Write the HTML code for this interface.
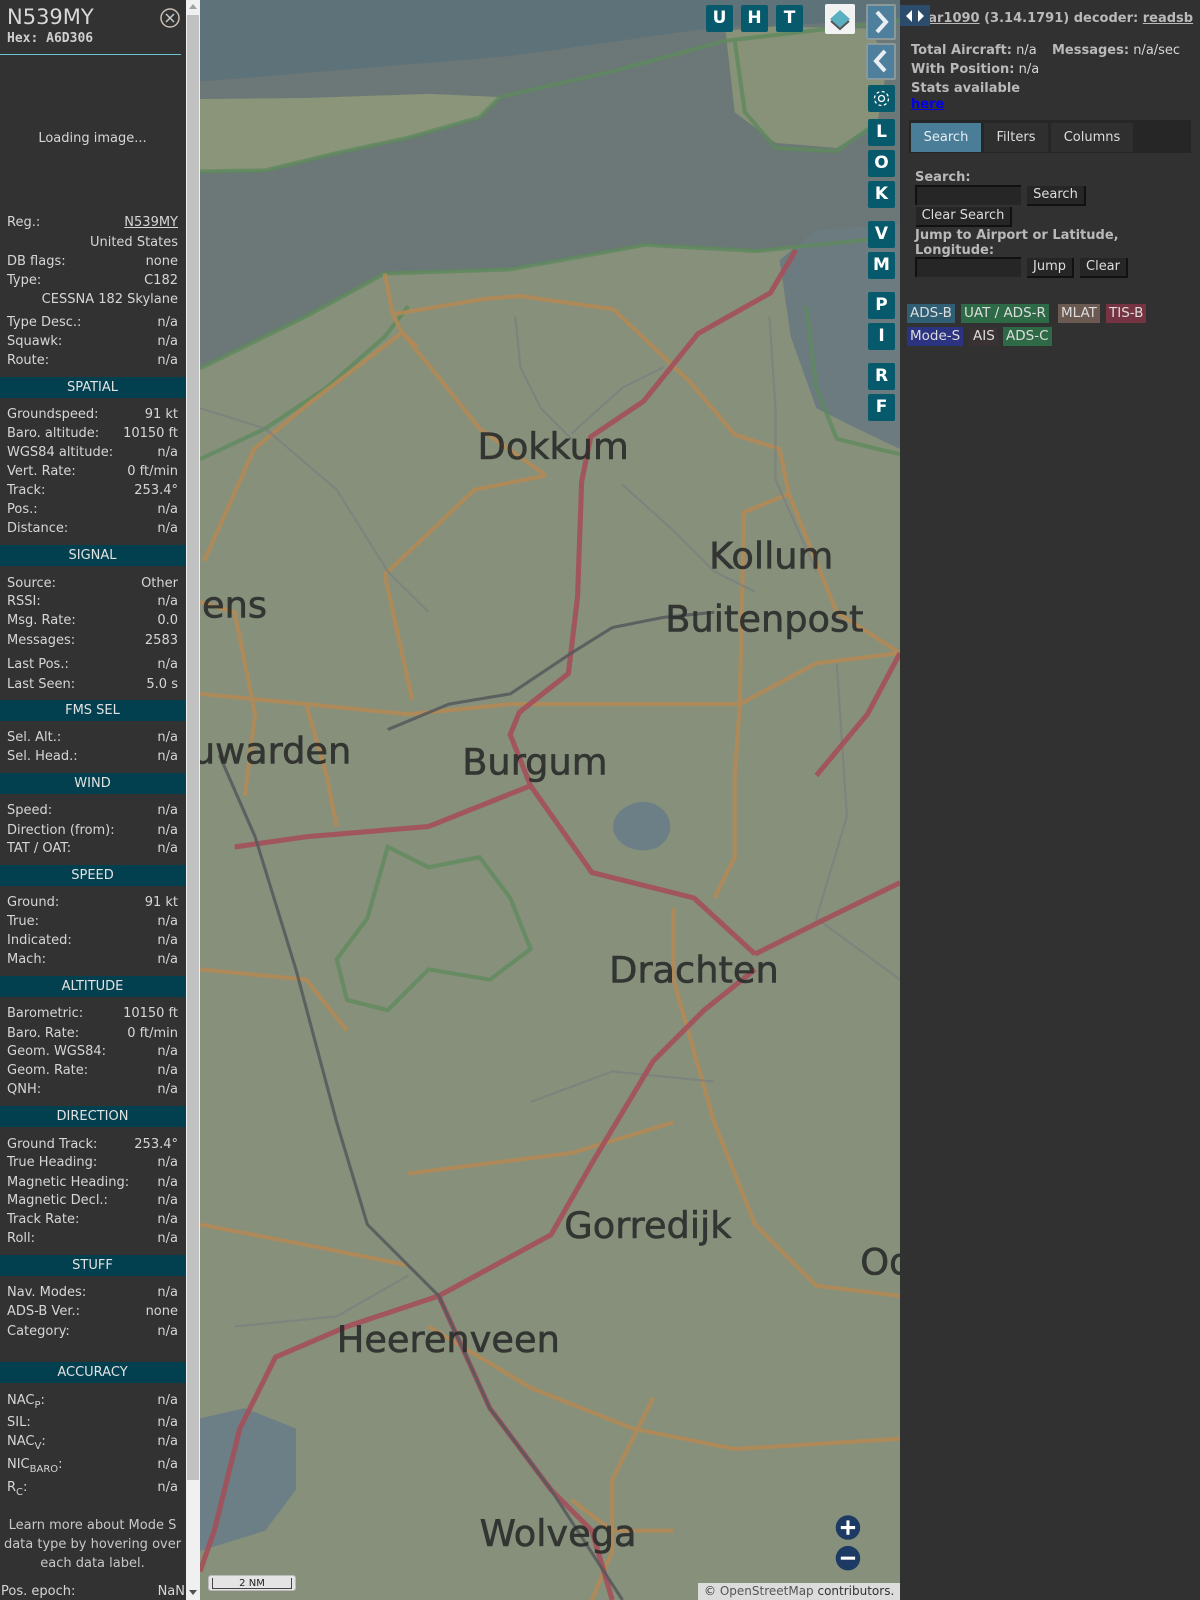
<!DOCTYPE html>
<html><head><meta charset="utf-8"><style>
*{margin:0;padding:0;box-sizing:border-box}
body{width:1200px;height:1600px;overflow:hidden;background:#313131;font-family:"DejaVu Sans","Liberation Sans",sans-serif;position:relative;color:#d6d6d6}
.a{position:absolute}
#side{position:absolute;left:0;top:0;width:186px;height:1600px;background:#323232;overflow:hidden}
.r{position:absolute;left:7px;width:171px;height:18px;line-height:18px;font-size:13px;white-space:nowrap;margin-top:2px}
.r .v{position:absolute;right:0;top:0}
.h{position:absolute;left:0;width:185px;height:21px;line-height:21px;text-align:center;background:#02404f;color:#e2e2e2;font-size:13px;margin-top:1px}
sub{font-size:10px;vertical-align:-4px;line-height:0}
.btn{position:absolute;width:27px;height:27px;background:#075a6b;color:#fff;font:bold 17px "DejaVu Sans",sans-serif;text-align:center;line-height:27px;border-radius:2px}
#rp{position:absolute;left:900px;top:0;width:300px;height:1600px;background:#313131}
.b{font-weight:bold;color:#b9b9b9}
.tab{position:absolute;top:123px;height:29px;line-height:29px;font-size:13px;text-align:center;background:#2f2f2f;color:#ddd}
.inp{position:absolute;width:106px;height:20px;background:#262626;border-top:2px solid #111;border-left:2px solid #111}
.bt{position:absolute;height:20px;line-height:18px;font-size:13px;background:#262626;color:#ddd;text-align:center;border-right:2px solid #111;border-bottom:2px solid #111}
.lg{position:absolute;height:19px;line-height:19px;font-size:13.5px;padding:0 3px;color:#ddd}
</style></head><body>

<svg class="a" style="left:0;top:0" width="1200" height="1600" viewBox="0 0 1176 1568">
<rect x="196" y="0" width="686" height="1568" fill="#86907a"/>
<!-- water -->
<path d="M196 0H882V240L850 235 780 242 742 246 632 240 500 264 377 268 300 310 196 361Z" fill="#6c7777"/>
<path d="M196 0H882V20L700 27 500 55 196 80Z" fill="#5e7379"/>
<path d="M196 97L300 96 420 92 490 95 470 115 400 135 330 150 260 167 196 168Z" fill="#8a9579"/>
<path d="M711 30L760 26 852 28 870 60 860 120 820 145 760 140 720 110Z" fill="#879278"/>
<path d="M764 255L800 225 882 220V440L840 420 800 400 775 330Z" fill="#6b7b80"/>
<path d="M615 790a25 20 0 1 0 30 40a20 18 0 1 0-30-40Z" fill="#6c7f86"/>
<path d="M196 1390L240 1380 290 1400 290 1460 260 1500 196 1520Z" fill="#6c7f86"/>
<!-- green boundaries -->
<g fill="none" stroke="#5f8a5e" stroke-width="4" opacity=".8">
<path d="M196 361L300 310 377 268 500 264 632 240 742 246 780 242 850 235"/>
<path d="M196 168L260 167 330 150 400 135 470 115 490 95 600 70 711 40 882 20"/>
<path d="M196 450L260 420 320 380 377 330 400 300"/>
<path d="M380 830L420 850 470 840 500 880 520 930 480 960 420 950 380 990 340 980 330 940 360 900Z"/>
<path d="M790 300L800 380 820 430 860 440 882 445"/>
<path d="M720 40L730 110 760 145 820 148 860 120"/>
</g>
<!-- orange roads -->
<g fill="none" stroke="#b58a55" stroke-width="4" opacity=".85">
<path d="M377 268L385 308 394 326 409 340"/>
<path d="M385 308L474 293 509 290 601 303 676 374 720 426 764 440 773 484 729 502 725 690"/>
<path d="M394 326L302 396 249 440 200 550"/>
<path d="M394 326L430 370 470 420 535 466"/>
<path d="M535 466L465 480 377 563 404 686"/>
<path d="M196 590L230 600 250 700 240 780"/>
<path d="M196 680L300 690 400 700 500 690 600 690 725 690 800 650 882 640"/>
<path d="M725 690L720 760 720 840 700 880"/>
<path d="M300 690L320 760 330 810"/>
<path d="M773 484L820 600 882 640"/>
<path d="M196 950L300 960 340 1010"/>
<path d="M660 890L660 960 700 1100 740 1200 800 1260 882 1270"/>
<path d="M400 1150L560 1130 660 1100"/>
<path d="M196 1200L300 1220 400 1240"/>
<path d="M420 1300L520 1360 620 1400 720 1420 882 1410"/>
<path d="M560 1470L600 1500 660 1500"/>
<path d="M640 1370L600 1450 600 1520 580 1568"/>
</g>
<!-- gray minor roads -->
<g fill="none" stroke="#7a7d80" stroke-width="2" opacity=".7">
<path d="M196 400L260 420 330 480 380 560 420 600"/>
<path d="M505 310L510 360 530 400 550 420 560 430"/>
<path d="M560 425L610 380 650 360"/>
<path d="M610 475L660 520 700 560 740 580"/>
<path d="M754 310L760 400 760 470 800 560"/>
<path d="M820 650L830 800 800 900 882 960"/>
<path d="M230 1300L330 1290 400 1250"/>
<path d="M520 1080L600 1050 700 1060"/>
</g>
<!-- red roads -->
<g fill="none" stroke="#a4505a" stroke-width="5" opacity=".9">
<path d="M780 245L755 287 684 327 631 393 579 428 570 472 566 585 557 660 509 698 500 720 520 770 580 855 680 880 740 935"/>
<path d="M740 935L800 905 882 865"/>
<path d="M230 830L300 820 420 810 520 770"/>
<path d="M740 950L690 990 640 1040 580 1140 540 1210 430 1270 340 1300 270 1330 235 1400 210 1500 196 1540"/>
<path d="M430 1270L480 1380 540 1460 580 1500 600 1568"/>
<path d="M800 760L850 700 882 640"/>
</g>
<!-- rail -->
<g fill="none" stroke="#55585c" stroke-width="3" opacity=".85">
<path d="M215 740L250 820 290 950 330 1100 360 1200 430 1270 480 1380 540 1460 610 1568"/>
<path d="M380 715L440 690 500 680 560 640 600 615 650 605 700 600"/>
</g>
<g font-family="DejaVu Sans,sans-serif" font-size="36" fill="#2a2c2b" stroke="#2a2c2b" stroke-width=".6" opacity=".9">
<text x="468" y="450">Dokkum</text>
<text x="695" y="557">Kollum</text>
<text x="188" y="605">iens</text>
<text x="652" y="619">Buitenpost</text>
<text x="188" y="748">uwarden</text>
<text x="453" y="759">Burgum</text>
<text x="597" y="963">Drachten</text>
<text x="553" y="1213">Gorredijk</text>
<text x="843" y="1249">Od</text>
<text x="330" y="1325">Heerenveen</text>
<text x="470" y="1515">Wolvega</text>
</g>
<g>
<circle cx="831" cy="1497" r="12" fill="#1c3a63"/><path d="M824 1497H838M831 1490V1504" stroke="#fff" stroke-width="3"/>
<circle cx="831" cy="1527" r="12" fill="#1c3a63"/><path d="M824 1527H838" stroke="#fff" stroke-width="3"/>
</g>
</svg>

<!-- scale & attribution -->
<div class="a" style="left:208px;top:1575px;width:88px;height:16px;background:#e4e4e4;border-radius:3px;border:1px solid #bbb"><div style="margin:2px 3px 0;border:1px solid #444;border-top:none;height:11px;font-size:10px;line-height:11px;text-align:center;color:#222">2 NM</div></div>
<div class="a" style="left:698px;top:1583px;width:202px;height:17px;background:#dcdcdc;font-size:12px;line-height:17px;color:#333;padding-left:6px;white-space:nowrap">© <span style="color:#555">OpenStreetMap</span> contributors.</div>

<!-- map buttons -->
<div class="btn" style="left:706px;top:5px">U</div>
<div class="btn" style="left:741px;top:5px">H</div>
<div class="btn" style="left:776px;top:5px">T</div>
<div class="a" style="left:825px;top:4px;width:30px;height:30px;background:#f2f2f2;border-radius:2px">
<svg width="30" height="30"><path d="M15 6L25 15 15 24 5 15Z" fill="#5ab0c0"/><path d="M6 17L15 25 24 17" fill="none" stroke="#555" stroke-width="2"/></svg></div>
<div class="a" style="left:866px;top:4px;width:30px;height:36px;background:#4e7f9c;border:2px solid #8a9a9a;border-radius:2px"><svg width="26" height="32"><path d="M9 6L18 16 9 26" fill="none" stroke="#e8eef2" stroke-width="4"/></svg></div>
<div class="a" style="left:866px;top:43px;width:30px;height:37px;background:#4e7f9c;border:2px solid #8a9a9a;border-radius:2px"><svg width="26" height="33"><path d="M17 6L8 16 17 26" fill="none" stroke="#e8eef2" stroke-width="4"/></svg></div>
<div class="btn" style="left:868px;top:85px"><svg width="27" height="27"><circle cx="13.5" cy="13.5" r="3" fill="none" stroke="#fff" stroke-width="1.3"/><circle cx="13.5" cy="13.5" r="7" fill="none" stroke="#fff" stroke-width="1.3" stroke-dasharray="3 2.5"/></svg></div>
<div class="btn" style="left:868px;top:119px">L</div>
<div class="btn" style="left:868px;top:150px">O</div>
<div class="btn" style="left:868px;top:181px">K</div>
<div class="btn" style="left:868px;top:221px">V</div>
<div class="btn" style="left:868px;top:252px">M</div>
<div class="btn" style="left:868px;top:292px">P</div>
<div class="btn" style="left:868px;top:323px">I</div>
<div class="btn" style="left:868px;top:363px">R</div>
<div class="btn" style="left:868px;top:394px">F</div>

<!-- right panel -->
<div id="rp">
<div class="a b" style="left:22px;top:11px;font-size:13px;white-space:nowrap"><u>tar1090</u> (3.14.1791) decoder: <u>readsb</u></div>
<div class="a" style="left:0;top:5px;width:30px;height:21px;background:#2c4c6e"><svg width="30" height="21"><path d="M6 11L12 5V17Z M24 11L18 5V17Z" fill="#fff"/></svg></div>
<div class="a" style="left:11px;top:43px;font-size:13px;white-space:nowrap"><span class="b">Total Aircraft:</span> n/a</div>
<div class="a" style="left:152px;top:43px;font-size:13px;white-space:nowrap"><span class="b">Messages:</span> n/a/sec</div>
<div class="a" style="left:11px;top:62px;font-size:13px"><span class="b">With Position:</span> n/a</div>
<div class="a b" style="left:11px;top:81px;font-size:13px">Stats available</div>
<div class="a" style="left:11px;top:97px;font-size:13px;font-weight:bold;color:#0000ee;text-decoration:underline">here</div>
<div class="a" style="left:9px;top:120px;width:282px;height:33px;background:#262626"></div>
<div class="tab" style="left:11px;width:70px;background:#4a7d98;color:#e6eef2">Search</div>
<div class="tab" style="left:84px;width:64px">Filters</div>
<div class="tab" style="left:151px;width:82px">Columns</div>
<div class="a b" style="left:15px;top:170px;font-size:13px">Search:</div>
<div class="inp" style="left:15px;top:185px"></div>
<div class="bt" style="left:127px;top:186px;width:59px">Search</div>
<div class="bt" style="left:16px;top:207px;width:96px">Clear Search</div>
<div class="a b" style="left:15px;top:228px;font-size:13px;line-height:15px">Jump to Airport or Latitude,<br>Longitude:</div>
<div class="inp" style="left:15px;top:257px"></div>
<div class="bt" style="left:127px;top:258px;width:47px">Jump</div>
<div class="bt" style="left:180px;top:258px;width:48px">Clear</div>
<div class="lg" style="left:7px;top:304px;background:#305f74">ADS-B</div>
<div class="lg" style="left:61px;top:304px;background:#2e6a46">UAT / ADS-R</div>
<div class="lg" style="left:158px;top:304px;background:#6a5a52">MLAT</div>
<div class="lg" style="left:206px;top:304px;background:#763443">TIS-B</div>
<div class="lg" style="left:7px;top:327px;background:#2c3380">Mode-S</div>
<div class="lg" style="left:70px;top:327px;background:#3a3232">AIS</div>
<div class="lg" style="left:103px;top:327px;background:#2e6a46">ADS-C</div>
</div>

<!-- scrollbar -->
<div class="a" style="left:186px;top:0;width:14px;height:1600px;background:#f0f0f0"></div>
<div class="a" style="left:187px;top:15px;width:12px;height:1465px;background:#c1c1c1"></div>
<div class="a" style="left:189px;top:4px;width:0;height:0;border:4px solid transparent;border-bottom:5px solid #a0a0a0;border-top:none"></div>
<div class="a" style="left:189px;top:1590px;width:0;height:0;border:4px solid transparent;border-top:5px solid #505050;border-bottom:none"></div>

<!-- sidebar -->
<div id="side">
<div class="a" style="left:7px;top:5px;font-size:21px;color:#d8d8d8;font-family:'DejaVu Sans',sans-serif">N539MY</div>
<div class="a" style="left:7px;top:31px;font:bold 13px 'DejaVu Sans Mono','Liberation Mono',monospace;color:#cfcfcf">Hex: A6D306</div>
<svg class="a" style="left:159px;top:8px" width="22" height="22"><circle cx="11" cy="10" r="9" fill="none" stroke="#c8bfb5" stroke-width="1.5"/><path d="M7 6L15 14M15 6L7 14" stroke="#c8c8c8" stroke-width="1.5"/></svg>
<div class="a" style="left:0;top:54px;width:181px;height:1px;background:#6cc2d0"></div>
<div class="a" style="left:0;top:131px;width:185px;text-align:center;font-size:13px">Loading image...</div>

<div class="r" style="top:212px">Reg.:<span class="v"><u>N539MY</u></span></div>
<div class="r" style="top:232px"><span class="v">United States</span></div>
<div class="r" style="top:251px">DB flags:<span class="v">none</span></div>
<div class="r" style="top:270px">Type:<span class="v">C182</span></div>
<div class="r" style="top:289px"><span class="v">CESSNA 182 Skylane</span></div>
<div class="r" style="top:312px">Type Desc.:<span class="v">n/a</span></div>
<div class="r" style="top:331px">Squawk:<span class="v">n/a</span></div>
<div class="r" style="top:350px">Route:<span class="v">n/a</span></div>
<div class="h" style="top:376px">SPATIAL</div>
<div class="r" style="top:404px">Groundspeed:<span class="v">91 kt</span></div>
<div class="r" style="top:423px">Baro. altitude:<span class="v">10150 ft</span></div>
<div class="r" style="top:442px">WGS84 altitude:<span class="v">n/a</span></div>
<div class="r" style="top:461px">Vert. Rate:<span class="v">0 ft/min</span></div>
<div class="r" style="top:480px">Track:<span class="v">253.4°</span></div>
<div class="r" style="top:499px">Pos.:<span class="v">n/a</span></div>
<div class="r" style="top:518px">Distance:<span class="v">n/a</span></div>
<div class="h" style="top:544px">SIGNAL</div>
<div class="r" style="top:573px">Source:<span class="v">Other</span></div>
<div class="r" style="top:591px">RSSI:<span class="v">n/a</span></div>
<div class="r" style="top:610px">Msg. Rate:<span class="v">0.0</span></div>
<div class="r" style="top:630px">Messages:<span class="v">2583</span></div>
<div class="r" style="top:654px">Last Pos.:<span class="v">n/a</span></div>
<div class="r" style="top:674px">Last Seen:<span class="v">5.0 s</span></div>
<div class="h" style="top:699px">FMS SEL</div>
<div class="r" style="top:727px">Sel. Alt.:<span class="v">n/a</span></div>
<div class="r" style="top:746px">Sel. Head.:<span class="v">n/a</span></div>
<div class="h" style="top:772px">WIND</div>
<div class="r" style="top:800px">Speed:<span class="v">n/a</span></div>
<div class="r" style="top:820px">Direction (from):<span class="v">n/a</span></div>
<div class="r" style="top:838px">TAT / OAT:<span class="v">n/a</span></div>
<div class="h" style="top:864px">SPEED</div>
<div class="r" style="top:892px">Ground:<span class="v">91 kt</span></div>
<div class="r" style="top:911px">True:<span class="v">n/a</span></div>
<div class="r" style="top:930px">Indicated:<span class="v">n/a</span></div>
<div class="r" style="top:949px">Mach:<span class="v">n/a</span></div>
<div class="h" style="top:975px">ALTITUDE</div>
<div class="r" style="top:1003px">Barometric:<span class="v">10150 ft</span></div>
<div class="r" style="top:1023px">Baro. Rate:<span class="v">0 ft/min</span></div>
<div class="r" style="top:1041px">Geom. WGS84:<span class="v">n/a</span></div>
<div class="r" style="top:1060px">Geom. Rate:<span class="v">n/a</span></div>
<div class="r" style="top:1079px">QNH:<span class="v">n/a</span></div>
<div class="h" style="top:1105px">DIRECTION</div>
<div class="r" style="top:1134px">Ground Track:<span class="v">253.4°</span></div>
<div class="r" style="top:1152px">True Heading:<span class="v">n/a</span></div>
<div class="r" style="top:1172px">Magnetic Heading:<span class="v">n/a</span></div>
<div class="r" style="top:1190px">Magnetic Decl.:<span class="v">n/a</span></div>
<div class="r" style="top:1209px">Track Rate:<span class="v">n/a</span></div>
<div class="r" style="top:1228px">Roll:<span class="v">n/a</span></div>
<div class="h" style="top:1254px">STUFF</div>
<div class="r" style="top:1282px">Nav. Modes:<span class="v">n/a</span></div>
<div class="r" style="top:1301px">ADS-B Ver.:<span class="v">none</span></div>
<div class="r" style="top:1321px">Category:<span class="v">n/a</span></div>
<div class="h" style="top:1361px">ACCURACY</div>
<div class="r" style="top:1390px">NAC<sub>P</sub>:<span class="v">n/a</span></div>
<div class="r" style="top:1412px">SIL:<span class="v">n/a</span></div>
<div class="r" style="top:1431px">NAC<sub>V</sub>:<span class="v">n/a</span></div>
<div class="r" style="top:1454px">NIC<sub>BARO</sub>:<span class="v">n/a</span></div>
<div class="r" style="top:1477px">R<sub>C</sub>:<span class="v">n/a</span></div>
<div class="a" style="left:0;top:1516px;width:185px;text-align:center;font-size:13px;line-height:19px;color:#c8c8c8">Learn more about Mode S<br>data type by hovering over<br>each data label.</div>
<div class="r" style="top:1581px;left:1px;width:184px">Pos. epoch:<span class="v">NaN</span></div>
</div>
</body></html>
